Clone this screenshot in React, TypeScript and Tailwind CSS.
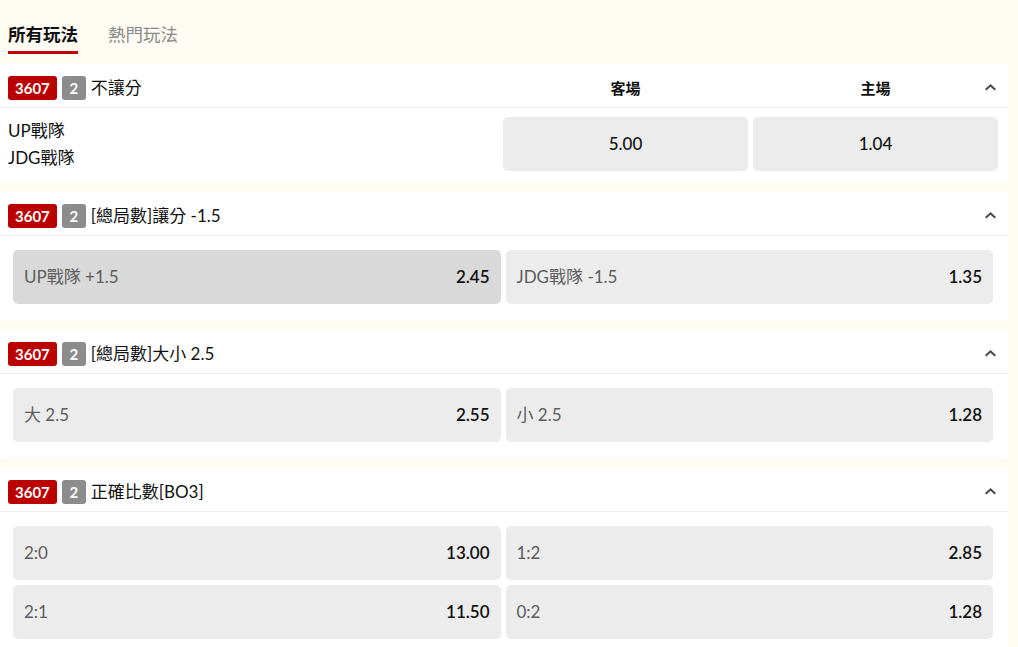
import React from "react";

const font = { fontFamily: '"Lato", "Noto Sans CJK TC", sans-serif' };

type Opt = { label: string; odds: string; active?: boolean };
type Market = { title: React.ReactNode; rows: Opt[][] };

const Chevron = () => (
  <svg className="absolute right-[12px] top-[20px]" width="11" height="7" viewBox="0 0 11 7">
    <path d="M5.5 0 L11 5 L9.6 6.4 L5.5 2.8 L1.4 6.4 L0 5 Z" fill="#4a4a4a" />
  </svg>
);

const Badges = () => (
  <>
    <span className="inline-flex items-center justify-center h-[24px] px-[7px] rounded-[3px] bg-[#bb0000] text-white text-[15px] font-bold leading-none">3607</span>
    <span className="inline-flex items-center justify-center h-[24px] w-[24px] ml-[5px] rounded-[3px] bg-[#8c8c8c] text-white text-[15px] font-bold leading-none">2</span>
  </>
);

const Header = ({ title }: { title: React.ReactNode }) => (
  <div className="relative flex items-start h-[44px] pt-[12px] pl-[8px] border-b border-[#ecedf5]">
    <Badges />
    <span className="ml-[5px] text-[17px] leading-[24px] text-[#111]">{title}</span>
    <Chevron />
  </div>
);

const markets: Market[] = [
  {
    title: "[總局數]讓分 -1.5",
    rows: [[{ label: "UP戰隊 +1.5", odds: "2.45", active: true }, { label: "JDG戰隊 -1.5", odds: "1.35" }]],
  },
  {
    title: "[總局數]大小 2.5",
    rows: [[{ label: "大 2.5", odds: "2.55" }, { label: "小 2.5", odds: "1.28" }]],
  },
  {
    title: "正確比數[BO3]",
    rows: [
      [{ label: "2:0", odds: "13.00" }, { label: "1:2", odds: "2.85" }],
      [{ label: "2:1", odds: "11.50" }, { label: "0:2", odds: "1.28" }],
    ],
  },
];

export default function App() {
  return (
    <div className="min-h-screen bg-[#fffcf3] pr-[10px]" style={font}>
      <div className="flex h-[64px] items-start pl-[8px] pt-[23px]">
        <div className="pb-[4px] border-b-[3px] border-[#c40000] text-[17.5px] font-bold text-[#111] leading-[24px]">所有玩法</div>
        <div className="ml-[30px] text-[17.5px] text-[#888] leading-[24px]">熱門玩法</div>
      </div>

      <div className="flex flex-col gap-[10px]">
        <div className="bg-white rounded-[4px]">
          <div className="relative flex items-start h-[44px] pt-[12px] pl-[8px] pr-[10px] border-b border-[#ecedf5]">
            <div className="flex flex-1 items-center">
              <Badges />
              <span className="ml-[5px] text-[17px] leading-[24px] text-[#111]">不讓分</span>
            </div>
            <div className="w-[245px] ml-[5px] text-center text-[15px] leading-[24px] font-bold text-[#111]">客場</div>
            <div className="w-[245px] ml-[5px] text-center text-[15px] leading-[24px] font-bold text-[#111]">主場</div>
            <Chevron />
          </div>
          <div className="flex items-center pt-[9px] pb-[11px] pl-[8px] pr-[10px]">
            <div className="flex-1 text-[17px] leading-[27px] text-[#111]">
              <div>UP戰隊</div>
              <div>JDG戰隊</div>
            </div>
            <div className="w-[245px] ml-[5px] h-[54px] rounded-[5px] bg-[#ececec] flex items-center justify-center text-[17px] font-medium text-[#111]">5.00</div>
            <div className="w-[245px] ml-[5px] h-[54px] rounded-[5px] bg-[#ececec] flex items-center justify-center text-[17px] font-medium text-[#111]">1.04</div>
          </div>
        </div>

        {markets.map((m, i) => (
          <div key={i} className="bg-white rounded-[4px]">
            <Header title={m.title} />
            <div className="flex flex-col gap-[5px] pt-[14px] pb-[16px] pl-[13px] pr-[15px]">
              {m.rows.map((row, j) => (
                <div key={j} className="grid grid-cols-2 gap-[5px]">
                  {row.map((o, k) => (
                    <div
                      key={k}
                      className={
                        o.active
                          ? "flex items-center justify-between h-[54px] px-[11px] rounded-[5px] bg-[#d9d9d9]"
                          : "flex items-center justify-between h-[54px] px-[11px] rounded-[5px] bg-[#ececec]"
                      }
                    >
                      <span className="text-[17px] text-[#5c5c5c]">{o.label}</span>
                      <span className="text-[17px] font-semibold text-[#111]">{o.odds}</span>
                    </div>
                  ))}
                </div>
              ))}
            </div>
          </div>
        ))}
      </div>
    </div>
  );
}
